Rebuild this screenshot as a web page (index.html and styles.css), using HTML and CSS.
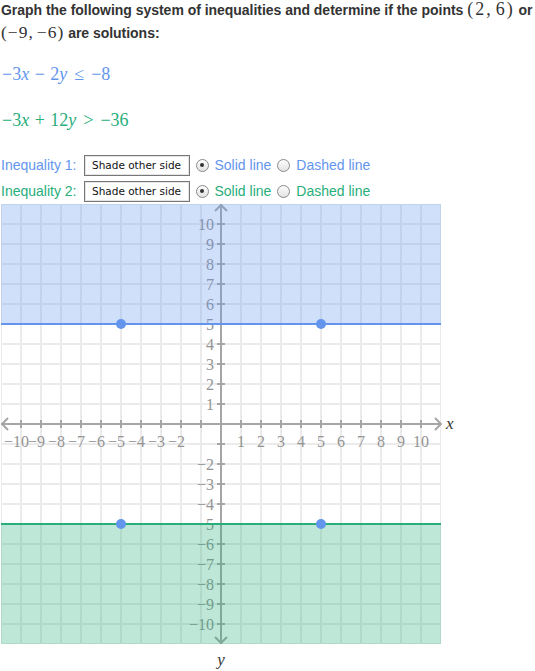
FILE: index.html
```html
<!DOCTYPE html>
<html>
<head>
<meta charset="utf-8">
<link rel="stylesheet" href="styles.css">
</head>
<body>
<p class="prompt">Graph the following system of inequalities and determine if the points <span class="m pt1">(2,<span class="gap"></span>6)</span> or<br><span class="m pt2">(−9,<span class="sgap"></span>−6)</span> are solutions:</p>

<div class="eq eq1 blue"><span class="m">−3<i>x</i><span class="bin">−</span>2<i>y</i><span class="rel">≤</span>−8</span></div>
<div class="eq eq2 green"><span class="m">−3<i>x</i><span class="bin">+</span>12<i>y</i><span class="rel">&gt;</span>−36</span></div>

<div class="controls">
  <div class="row blue">
    <span class="label">Inequality 1:</span>
    <button class="shade" type="button">Shade other side</button>
    <span class="radio checked"></span><span class="opt">Solid line</span>
    <span class="radio"></span><span class="opt">Dashed line</span>
  </div>
  <div class="row green">
    <span class="label">Inequality 2:</span>
    <button class="shade" type="button">Shade other side</button>
    <span class="radio checked"></span><span class="opt">Solid line</span>
    <span class="radio"></span><span class="opt">Dashed line</span>
  </div>
</div>

<svg class="graph" width="470" height="467" viewBox="0 0 470 467">
  <defs>
    <pattern id="grid" x="-9" y="-10" width="20" height="20" patternUnits="userSpaceOnUse">
      <path class="gridline" d="M10 0V20M0 10H20"/>
    </pattern>
  </defs>
  <rect x="1" y="0" width="440" height="440" fill="url(#grid)"/>

  <path class="axis" d="M1 220H441M221 0V440"/>
  <path class="ticks" d="M20 220H422"/>
  <path class="ticks" d="M221 19V421"/>
  <path class="axis" d="M8 214L2 220L8 226M435 214L441 220L435 226M215 7L221 1L227 7M215 433L221 439L227 433"/>

  <g class="lbl end">
    <text x="29" y="243">−10</text>
    <text x="45" y="243">−9</text>
    <text x="65" y="243">−8</text>
    <text x="85" y="243">−7</text>
    <text x="105" y="243">−6</text>
    <text x="125" y="243">−5</text>
    <text x="145" y="243">−4</text>
    <text x="165" y="243">−3</text>
    <text x="185" y="243">−2</text>
  </g>
  <g class="lbl mid">
    <text x="241" y="243">1</text>
    <text x="261" y="243">2</text>
    <text x="281" y="243">3</text>
    <text x="301" y="243">4</text>
    <text x="321" y="243">5</text>
    <text x="341" y="243">6</text>
    <text x="361" y="243">7</text>
    <text x="381" y="243">8</text>
    <text x="401" y="243">9</text>
    <text x="421" y="243">10</text>
  </g>
  <g class="lbl end">
    <text x="214" y="25.5">10</text>
    <text x="214" y="45.5">9</text>
    <text x="214" y="65.5">8</text>
    <text x="214" y="85.5">7</text>
    <text x="214" y="105.5">6</text>
    <text x="214" y="125.5">5</text>
    <text x="214" y="145.5">4</text>
    <text x="214" y="165.5">3</text>
    <text x="214" y="185.5">2</text>
    <text x="214" y="205.5">1</text>
    <text x="214" y="265.5">−2</text>
    <text x="214" y="285.5">−3</text>
    <text x="214" y="305.5">−4</text>
    <text x="214" y="325.5">−5</text>
    <text x="214" y="345.5">−6</text>
    <text x="214" y="365.5">−7</text>
    <text x="214" y="385.5">−8</text>
    <text x="214" y="405.5">−9</text>
    <text x="214" y="425.5">−10</text>
  </g>

  <rect class="fill-blue" x="1" y="0" width="440" height="120"/>
  <rect class="fill-green" x="1" y="320" width="440" height="120"/>
  <path class="line-blue" d="M1 120H441"/>
  <path class="line-green" d="M1 320H441"/>

  <circle class="pt" cx="121" cy="120" r="5"/>
  <circle class="pt" cx="321" cy="120" r="5"/>
  <circle class="pt" cx="121" cy="320" r="5"/>
  <circle class="pt" cx="321" cy="320" r="5"/>

  <text class="axlbl" x="446" y="225">x</text>
  <text class="axlbl mid" x="221" y="461">y</text>
</svg>
</body>
</html>
```

FILE: styles.css
```css
html, body {
  margin: 0;
  padding: 0;
  background: #fff;
}
body {
  box-sizing: border-box;
  width: 535px;
  padding-left: 1px;
  font-family: "Liberation Sans", Arial, Helvetica, sans-serif;
  font-size: 14px;
  color: #333;
  overflow: hidden;
}
.blue { color: #6495ed; }
.green { color: #28ae7b; }

.prompt {
  margin: -2px 0 0 0;
  height: 44px;
  line-height: 22px;
  font-weight: bold;
  white-space: nowrap;
  letter-spacing: -0.03px;
}
.m {
  font-family: "Liberation Serif", "Times New Roman", serif;
  font-weight: normal;
  font-size: 18px;
  letter-spacing: 0;
}
.m i { font-style: italic; }
.pt1 { letter-spacing: 2px; }
.pt2 { font-size: 17.5px; letter-spacing: 1px; }
.gap { display: inline-block; width: 3px; }
.sgap { display: inline-block; width: 3px; }

.eq {
  height: 22px;
  line-height: 22px;
  padding-left: 1px;
}
.eq1 { margin-top: 21px; }
.eq2 { margin-top: 24px; }
.bin { margin: 0 5.5px; }
.rel { margin: 0 7px; }

.controls { margin-top: 21px; }
.row {
  display: flex;
  align-items: center;
  height: 26px;
  line-height: 16px;
}
.label { margin-right: 7px; }
.shade {
  box-sizing: border-box;
  width: 106px;
  height: 21px;
  margin: 0 6px 0 0;
  padding: 0;
  background: #fff;
  border: 1px solid #777;
  box-shadow: inset 0 0 0 1px #e4e4e4;
  border-radius: 0;
  font-family: "DejaVu Sans", Verdana, sans-serif;
  font-size: 10.5px;
  color: #111;
}
.radio {
  box-sizing: border-box;
  width: 13px;
  height: 13px;
  border-radius: 50%;
  border: 1px solid #8a8a8a;
  background: linear-gradient(#fdfdfd, #e2e2e2);
  margin-right: 6px;
  position: relative;
}
.radio.checked::after {
  content: "";
  position: absolute;
  left: 3.5px;
  top: 3.5px;
  width: 4px;
  height: 4px;
  border-radius: 50%;
  background: #333;
}
.opt { margin-right: 6px; }

.graph {
  display: block;
  margin-top: 0;
  margin-left: -1px;
  overflow: visible;
}
.gridline {
  fill: none;
  stroke: #ebebeb;
  stroke-width: 2;
}
.axis {
  fill: none;
  stroke: #a6a6a6;
  stroke-width: 2;
}
.ticks {
  fill: none;
  stroke: #a6a6a6;
  stroke-width: 8;
  stroke-dasharray: 2 18;
}
.lbl {
  font-family: "Liberation Serif", "Times New Roman", serif;
  font-size: 16px;
  fill: #949494;
}
.end text { text-anchor: end; }
.mid text, text.mid { text-anchor: middle; }
.fill-blue { fill: #6495ed; fill-opacity: 0.3; }
.fill-green { fill: #28ae7b; fill-opacity: 0.3; }
.line-blue { stroke: #6495ed; stroke-width: 2; fill: none; }
.line-green { stroke: #28ae7b; stroke-width: 2; fill: none; }
.pt { fill: #6495ed; }
.axlbl {
  font-family: "Liberation Serif", "Times New Roman", serif;
  font-style: italic;
  font-size: 17px;
  fill: #333;
}
```
